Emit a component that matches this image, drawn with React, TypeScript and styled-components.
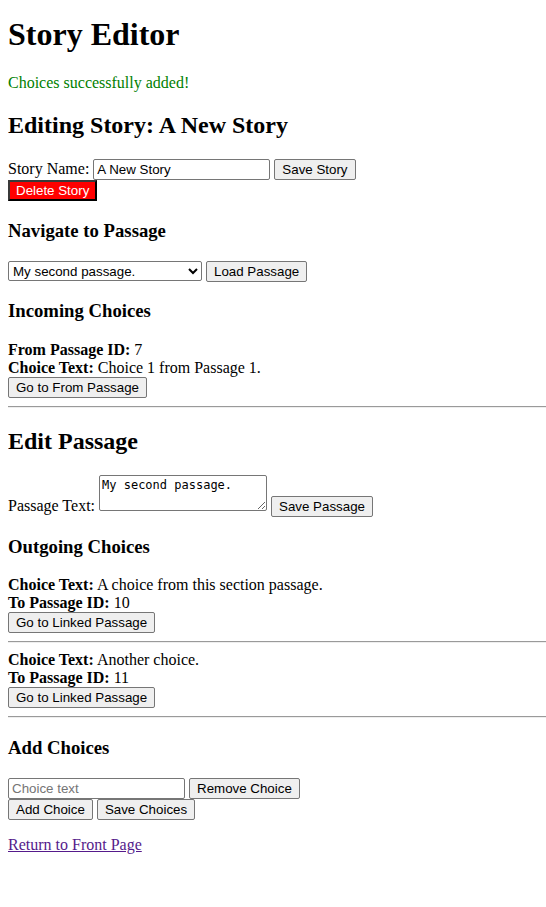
import React from "react";
import styled, { createGlobalStyle } from "styled-components";

const Global = createGlobalStyle`
  html, body { background: #fff; }
  body {
    margin: 0 0 8px 8px;
    font-family: "Liberation Serif", "Times New Roman", serif;
    font-size: 16px;
    color: #000;
  }
`;

const Page = styled.div`
  display: flow-root;
`;

const Title = styled.h1`
  font-size: 32px;
  font-weight: bold;
  margin: 16px 0 21.44px;
`;

const Notice = styled.p`
  color: green;
  margin: 16px 0;
`;

const SectionTitle = styled.h2`
  font-size: 24px;
  font-weight: bold;
  margin: 19.92px 0;
`;

const SubTitle = styled.h3`
  font-size: 18.72px;
  font-weight: bold;
  margin: 18.72px 0;
`;

const Row = styled.div``;

const Button = styled.button<{ $danger?: boolean }>`
  font-family: "Liberation Sans", Arial, sans-serif;
  font-size: 13.333px;
  line-height: normal;
  padding: ${(p) => (p.$danger ? "1px 6px" : "2px 7px")};
  margin: 0;
  border-radius: ${(p) => (p.$danger ? "0" : "2px")};
  border: ${(p) => (p.$danger ? "2px outset #3a3a3a" : "1px solid #767676")};
  background: ${(p) => (p.$danger ? "red" : "#efefef")};
  color: ${(p) => (p.$danger ? "#fff" : "#000")};
  cursor: pointer;
`;

const TextInput = styled.input`
  font-family: "Liberation Sans", Arial, sans-serif;
  font-size: 13.333px;
  padding: 2px 3px;
  margin: 0;
  border: 1px solid #767676;
  border-radius: 2px;
  box-sizing: border-box;
  width: 177px;
  &::placeholder { color: #757575; }
`;

const Select = styled.select`
  font-family: "Liberation Sans", Arial, sans-serif;
  font-size: 13.333px;
  margin: 0;
  border: 1px solid #767676;
  border-radius: 2px;
  background: #fff;
  width: 194px;
  height: 20px;
`;

const TextArea = styled.textarea`
  font-family: "DejaVu Sans Mono", "Liberation Mono", monospace;
  font-size: 12px;
  padding: 2px;
  margin: 0;
  border: 1px solid #767676;
  border-radius: 2px;
  width: 162px;
  height: 30px;
`;

const Entry = styled.div`
  margin-right: 8px;
`;

const Divider = styled.hr`
  border: none;
  border-top: 1px solid #9a9a9a;
  border-bottom: 1px solid #eee;
  margin: 8px 0;
`;

const ReturnLink = styled.a`
  color: #551a8b;
  text-decoration: underline;
`;

const Para = styled.p`
  margin: 16px 0;
`;

const outgoing = [
  { text: "A choice from this section passage.", to: 10 },
  { text: "Another choice.", to: 11 },
];

export default function App() {
  return (
    <Page>
      <Global />
      <Title>Story Editor</Title>
      <Notice>Choices successfully added!</Notice>
      <SectionTitle>Editing Story: A New Story</SectionTitle>
      <Row>
        Story Name: <TextInput defaultValue="A New Story" /> <Button>Save Story</Button>
        <br />
        <Button $danger>Delete Story</Button>
      </Row>
      <SubTitle>Navigate to Passage</SubTitle>
      <Row>
        <Select defaultValue="2">
          <option value="2">My second passage.</option>
        </Select>{" "}
        <Button>Load Passage</Button>
      </Row>
      <SubTitle>Incoming Choices</SubTitle>
      <Entry>
        <strong>From Passage ID:</strong> 7
        <br />
        <strong>Choice Text:</strong> Choice 1 from Passage 1.
        <br />
        <Button>Go to From Passage</Button>
      </Entry>
      <Divider />
      <SectionTitle>Edit Passage</SectionTitle>
      <Row>
        Passage Text: <TextArea defaultValue="My second passage." /> <Button>Save Passage</Button>
      </Row>
      <SubTitle>Outgoing Choices</SubTitle>
      {outgoing.map((c) => (
        <React.Fragment key={c.to}>
          <Entry>
            <strong>Choice Text:</strong> {c.text}
            <br />
            <strong>To Passage ID:</strong> {c.to}
            <br />
            <Button>Go to Linked Passage</Button>
          </Entry>
          <Divider />
        </React.Fragment>
      ))}
      <SubTitle>Add Choices</SubTitle>
      <Row>
        <TextInput placeholder="Choice text" /> <Button>Remove Choice</Button>
      </Row>
      <Row>
        <Button>Add Choice</Button> <Button>Save Choices</Button>
      </Row>
      <Para>
        <ReturnLink href="#">Return to Front Page</ReturnLink>
      </Para>
    </Page>
  );
}
